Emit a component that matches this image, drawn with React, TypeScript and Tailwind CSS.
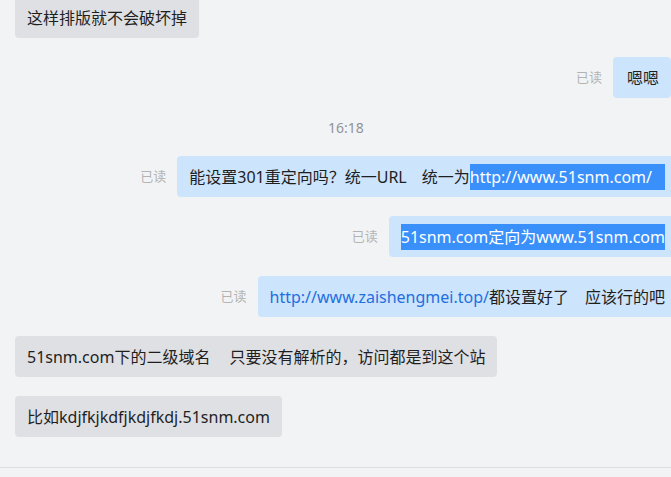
import type { ReactNode } from 'react'

const font = "font-['Noto_Sans','Noto_Sans_CJK_SC',sans-serif]"

function Left({ children }: { children: ReactNode }) {
  return (
    <div className="flex">
      <div className="rounded-[4px] bg-[#dfe0e4] px-3 py-[7.5px] text-[16px] leading-[26px] text-[#1f1f1f] whitespace-nowrap">
        {children}
      </div>
    </div>
  )
}

function Right({ children, overflow = true }: { children: ReactNode; overflow?: boolean }) {
  return (
    <div className={`flex items-center justify-end gap-[11px] ${overflow ? 'mr-[-6px]' : ''}`}>
      <span className="text-[13px] text-[#b3b3b3]">已读</span>
      <div className="rounded-[4px] bg-[#cce4fc] px-3 py-[7.5px] text-[16px] leading-[26px] text-[#1f1f1f] whitespace-nowrap">
        {children}
      </div>
    </div>
  )
}

function Sel({ children }: { children: ReactNode }) {
  return <span className="inline-block bg-[#3990fb] text-white">{children}</span>
}

// wide gaps typed with several spaces in the original messages
function Gap({ w }: { w: string }) {
  return <span className={`inline-block ${w}`} />
}

export default function App() {
  return (
    <div className={`${font} h-[477px] w-[671px] overflow-hidden bg-[#f2f3f5] flex flex-col`}>
      <div className="flex-1 flex flex-col gap-[19px] pl-[15px] mt-[-3px]">
        <Left>这样排版就不会破坏掉</Left>
        <Right overflow={false}>
          <span className="pl-[2px]">嗯嗯</span>
        </Right>
        <div className="h-[20px] flex items-center justify-center pl-[6px] text-[14px] text-[#8f939b]">16:18</div>
        <Right>
          能设置301重定向吗？统一URL<Gap w="w-[15px]" />统一为
          <Sel>
            http://www.51snm.com/<Gap w="w-[13px]" />
          </Sel>
        </Right>
        <Right>
          <Sel>51snm.com定向为www.51snm.com</Sel>
        </Right>
        <Right>
          <span className="text-[#1f6fe0]">http://www.zaishengmei.top/</span>都设置好了<Gap w="w-[16px]" />应该行的吧
        </Right>
        <Left>
          51snm.com下的二级域名<Gap w="w-[19px]" />只要没有解析的，访问都是到这个站
        </Left>
        <Left>比如kdjfkjkdfjkdjfkdj.51snm.com</Left>
      </div>
      <div className="h-[10px] border-t border-[#dcdde0]" />
    </div>
  )
}
